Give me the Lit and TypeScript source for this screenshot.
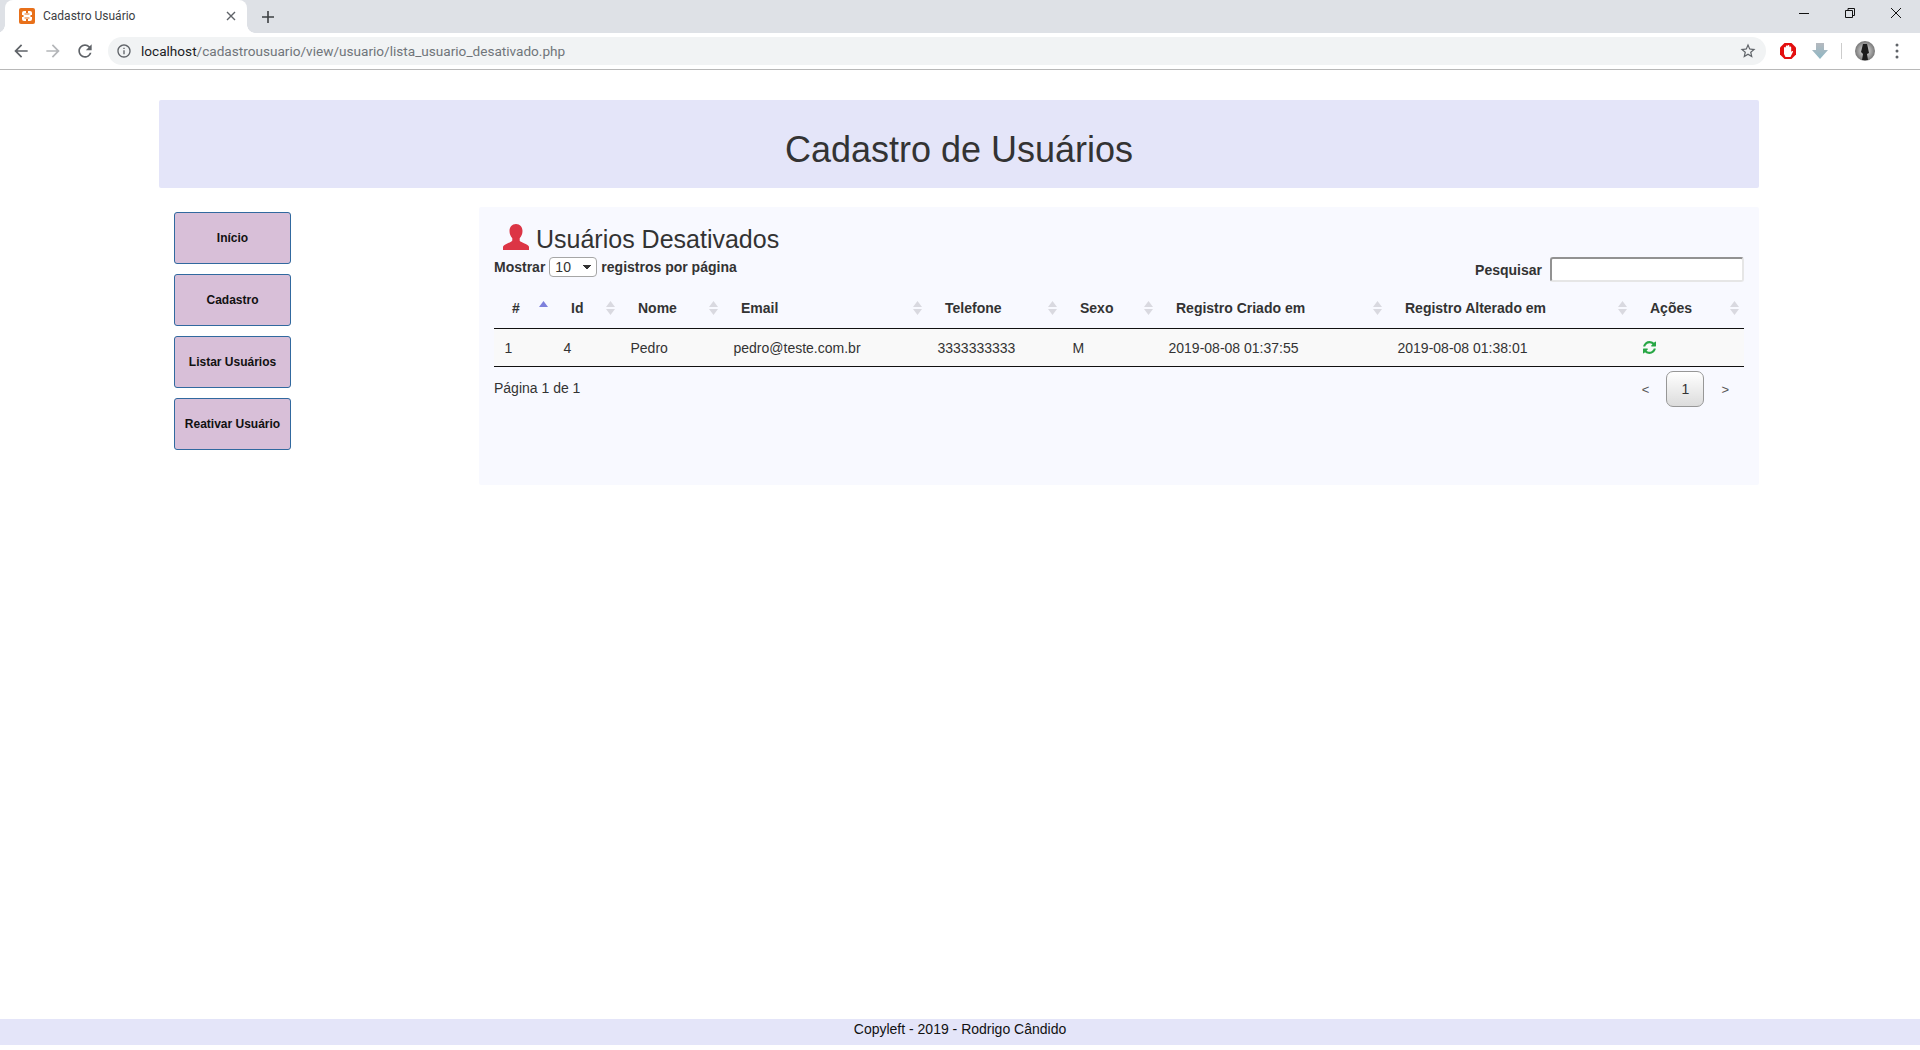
import { LitElement, html, css, svg } from 'lit';
import { customElement } from 'lit/decorators.js';

const COLUMNS = ['#', 'Id', 'Nome', 'Email', 'Telefone', 'Sexo', 'Registro Criado em', 'Registro Alterado em', 'Ações'];
const MENU = ['Início', 'Cadastro', 'Listar Usuários', 'Reativar Usuário'];
const ROW = ['1', '4', 'Pedro', 'pedro@teste.com.br', '3333333333', 'M', '2019-08-08 01:37:55', '2019-08-08 01:38:01'];

// Small helper for the material style icons of the browser bar
const icon = (d: string, fill = '#5f6368', size = 20) => html`
  <svg width=${size} height=${size} viewBox="0 0 24 24" fill=${fill}>${svg`<path d=${d}></path>`}</svg>`;

const ARROW_BACK = 'M20 11H7.83l5.59-5.59L12 4l-8 8 8 8 1.41-1.41L7.83 13H20v-2z';
const ARROW_FORWARD = 'M12 4l-1.41 1.41L16.17 11H4v2h12.17l-5.58 5.59L12 20l8-8z';
const RELOAD = 'M17.65 6.35A7.96 7.96 0 0 0 12 4c-4.42 0-7.99 3.58-7.99 8s3.57 8 7.99 8c3.73 0 6.84-2.55 7.73-6h-2.08A5.99 5.99 0 0 1 12 18c-3.31 0-6-2.69-6-6s2.69-6 6-6c1.66 0 3.14.69 4.22 1.78L13 11h7V4l-2.35 2.35z';
const INFO = 'M11 7h2v2h-2zm0 4h2v6h-2zm1-9C6.48 2 2 6.48 2 12s4.48 10 10 10 10-4.48 10-10S17.52 2 12 2zm0 18c-4.41 0-8-3.59-8-8s3.59-8 8-8 8 3.59 8 8-3.59 8-8 8z';
const STAR = 'M22 9.24l-7.19-.62L12 2 9.19 8.63 2 9.24l5.46 4.73L5.82 21 12 17.27 18.18 21l-1.63-7.03L22 9.24zM12 15.4l-3.76 2.27 1-4.28-3.32-2.88 4.38-.38L12 6.1l1.71 4.04 4.38.38-3.32 2.88 1 4.28L12 15.4z';
const REFRESH = 'M1511 928q0 5-1 7-64 268-268 434.5t-478 166.5q-146 0-282.5-55t-243.5-157l-129 129q-19 19-45 19t-45-19-19-45v-448q0-26 19-45t45-19h448q26 0 45 19t19 45-19 45l-137 137q71 66 161 102t187 36q134 0 250-65t186-179q11-17 53-117 8-23 30-23h192q13 0 22.5 9.5t9.5 22.5zm25-800v448q0 26-19 45t-45 19h-448q-26 0-45-19t-19-45 19-45l138-138q-148-137-349-137-134 0-250 65t-186 179q-11 17-53 117-8 23-30 23h-199q-13 0-22.5-9.5t-9.5-22.5v-7q65-268 270-434.5t480-166.5q146 0 284 55.5t245 156.5l130-129q19-19 45-19t45 19 19 45z';

@customElement('app-root')
export class AppRoot extends LitElement {
  static styles = css`
    :host {
      display: flex;
      flex-direction: column;
      height: 1050px;
      overflow: hidden;
      background: #fff;
      font-family: 'Liberation Sans', Arial, sans-serif;
      font-size: 14px;
      color: #333;
    }

    /* browser window */
    .tabstrip {
      height: 33px;
      background: #dee1e6;
      display: flex;
      align-items: flex-end;
      padding-left: 5px;
      flex: none;
    }
    .tab {
      position: relative;
      width: 242px;
      height: 33px;
      box-sizing: border-box;
      background: #fff;
      border-radius: 8px 8px 0 0;
      display: flex;
      align-items: center;
      padding: 0 0 2px 14px;
      font-family: Roboto, sans-serif;
      font-size: 12px;
      color: #3c4043;
    }
    .tab::before, .tab::after {
      content: '';
      position: absolute;
      bottom: 0;
      width: 8px;
      height: 8px;
    }
    .tab::before { left: -8px; background: radial-gradient(circle at 0 0, #dee1e6 7.5px, #fff 8px); }
    .tab::after { right: -8px; background: radial-gradient(circle at 100% 0, #dee1e6 7.5px, #fff 8px); }
    .tab-title { margin-left: 8px; flex: 1; }
    .tab-close { margin-right: 11px; display: flex; }
    .new-tab { margin: 0 0 10px 15px; display: flex; }
    .win-controls {
      margin-left: auto;
      align-self: flex-start;
      display: flex;
      gap: 26px;
      padding: 3px 14px 0 0;
    }
    .toolbar {
      height: 36px;
      flex: none;
      box-sizing: content-box;
      border-bottom: 1px solid #b8b8b8;
      display: flex;
      align-items: center;
      padding: 0 0 0 11px;
      background: #fff;
    }
    .nav { display: flex; gap: 12px; }
    .omnibox {
      margin-left: 13px;
      width: 1658px;
      height: 28px;
      box-sizing: border-box;
      border-radius: 14px;
      background: #f1f3f4;
      display: flex;
      align-items: center;
      padding: 0 9px 0 8px;
      font-family: Roboto, sans-serif;
      font-size: 13.6px;
      color: #70757a;
    }
    .url { margin-left: 9px; flex: 1; }
    .url b { font-weight: 400; color: #202124; }
    .extensions { display: flex; align-items: center; margin-left: 13px; }
    .ext-sep { width: 1px; height: 16px; background: #ccc; margin: 0 13px 0 12px; }
    .dots { margin-left: 20px; }

    /* page */
    .page {
      flex: 1;
      display: flex;
      flex-direction: column;
    }
    .banner {
      margin: 30px 161px 0 159px;
      height: 88px;
      background: #e4e5f9;
      border-radius: 2px;
      display: flex;
      align-items: center;
      justify-content: center;
    }
    .banner h1 {
      margin: 0;
      font-size: 36px;
      font-weight: 400;
      line-height: 40px;
      padding-top: 12px;
      color: #333;
    }
    .main {
      margin: 19px 161px 0 159px;
      display: grid;
      grid-template-columns: 320px 1fr;
    }
    .menu {
      display: flex;
      flex-direction: column;
      gap: 10px;
      padding: 5px 0 0 15px;
    }
    .menu button {
      width: 117px;
      height: 52px;
      padding: 0;
      background: #d8bfd8;
      border: 1px solid #31699f;
      border-radius: 3px;
      font: bold 12px 'Liberation Sans', Arial, sans-serif;
      color: #111;
    }
    .panel {
      background: #f8f9ff;
      border-radius: 2px;
      padding: 17px 15px 78px 15px;
    }
    .heading {
      display: flex;
      align-items: flex-start;
      gap: 7px;
      height: 33px;
      padding-left: 9px;
    }
    .heading h2 {
      margin: 0;
      font-size: 25px;
      font-weight: 400;
      line-height: 30px;
      color: #333;
    }
    .controls {
      display: flex;
      justify-content: space-between;
      align-items: flex-start;
      font-weight: 700;
      height: 31px;
    }
    .length { display: flex; align-items: center; gap: 4px; height: 20px; }
    .length select {
      appearance: none;
      width: 48px;
      height: 20px;
      padding: 0 0 0 5px;
      background:
        linear-gradient(to top right, transparent 50%, #333 50%) 33px 7px / 4px 5px no-repeat,
        linear-gradient(to top left, transparent 50%, #333 50%) 37px 7px / 4px 5px no-repeat,
        #fff;
      border: 1px solid #a6a6a6;
      border-radius: 4px;
      font: 14px 'Liberation Sans', Arial, sans-serif;
      color: #333;
    }
    .search { display: flex; align-items: center; gap: 8px; height: 25px; }
    .search input {
      width: 194px;
      height: 25px;
      box-sizing: border-box;
      background: #fff;
      border: 2px inset #e6e6e6;
      border-radius: 3px;
      padding: 0 4px;
    }
    table {
      width: 1250px;
      table-layout: fixed;
      border-collapse: collapse;
    }
    col.c0 { width: 59px; }
    col.c1 { width: 67px; }
    col.c2 { width: 103px; }
    col.c3 { width: 204px; }
    col.c4 { width: 135px; }
    col.c5 { width: 96px; }
    col.c6 { width: 229px; }
    col.c7 { width: 245px; }
    col.c8 { width: 112px; }
    th {
      height: 40px;
      padding: 0;
      text-align: left;
      font-weight: 700;
      border-bottom: 1px solid #111;
    }
    .th-inner {
      display: flex;
      justify-content: space-between;
      align-items: center;
      padding: 0 5px 0 18px;
    }
    td {
      height: 37px;
      padding: 0 0 0 10.5px;
      background: #f9f9f9;
      border-bottom: 1px solid #111;
    }
    td svg { display: block; }
    .foot {
      display: flex;
      justify-content: space-between;
      align-items: center;
      margin-top: 4px;
      height: 36px;
    }
    .foot .info { margin-top: -2px; }
    .pager { display: flex; align-items: center; gap: 17px; padding-right: 15px; }
    .pager span { font-size: 13px; color: #555; }
    .pager button {
      width: 38px;
      height: 36px;
      padding: 0;
      border: 1px solid #979797;
      border-radius: 7px;
      background: linear-gradient(#fff, #dcdcdc);
      font: 14px 'Liberation Sans', Arial, sans-serif;
      color: #333;
    }
    footer {
      margin: auto 0 5px;
      height: 26px;
      background: #e4e5f9;
      text-align: center;
      line-height: 21px;
      color: #111;
    }
  `;

  private sortIcon(active: boolean) {
    return html`
      <svg width="9" height="14" viewBox="0 0 9 14">
        <path d="M4.5 0L9 6H0z" fill=${active ? '#7d80dc' : '#d9d9e0'}></path>
        ${active ? '' : svg`<path d="M4.5 14L0 8h9z" fill="#d9d9e0"></path>`}
      </svg>`;
  }

  private renderBrowser() {
    return html`
      <div class="tabstrip">
        <div class="tab">
          <svg width="16" height="16" viewBox="0 0 16 16">
            <rect width="16" height="16" rx="2" fill="#e8701a"></rect>
            <rect x="3" y="3" width="10" height="10" rx="2" fill="#fff"></rect>
            <g fill="#e8701a">
              <rect x="7" y="3" width="2" height="2"></rect>
              <rect x="7" y="11" width="2" height="2"></rect>
              <rect x="3" y="7" width="1.500" height="2"></rect>
              <rect x="11.500" y="7" width="1.500" height="2"></rect>
              <rect x="5.500" y="5.500" width="5" height="1"></rect>
              <rect x="5.500" y="9.500" width="5" height="1"></rect>
            </g>
          </svg>
          <span class="tab-title">Cadastro Usuário</span>
          <span class="tab-close">
            <svg width="10" height="10" viewBox="0 0 10 10"><path d="M1 1l8 8M9 1l-8 8" stroke="#5f6368" stroke-width="1.4"></path></svg>
          </span>
        </div>
        <span class="new-tab">
          <svg width="12" height="12" viewBox="0 0 12 12"><path d="M6 0v12M0 6h12" stroke="#3c4043" stroke-width="1.6"></path></svg>
        </span>
        <div class="win-controls">
          <svg width="20" height="20" viewBox="0 0 20 20"><path d="M5 10.5h10" stroke="#111" stroke-width="1"></path></svg>
          <svg width="20" height="20" viewBox="0 0 20 20" fill="none" stroke="#111"><path d="M5.5 7.5h7v7h-7zM8 7.5V5.500h6.500v7h-2"></path></svg>
          <svg width="20" height="20" viewBox="0 0 20 20"><path d="M5 5l10 10M15 5L5 15" stroke="#111" stroke-width="1"></path></svg>
        </div>
      </div>
      <div class="toolbar">
        <div class="nav">
          ${icon(ARROW_BACK)}
          ${icon(ARROW_FORWARD, '#b4b6b9')}
          ${icon(RELOAD)}
        </div>
        <div class="omnibox">
          ${icon(INFO, '#5f6368', 16)}
          <span class="url"><b>localhost</b>/cadastrousuario/view/usuario/lista_usuario_desativado.php</span>
          ${icon(STAR, '#5f6368', 18)}
        </div>
        <div class="extensions">
          <svg width="18" height="18" viewBox="0 0 18 18">
            <path d="M5.500 1h7L17 5.500v7L12.500 17h-7L1 12.500v-7z" fill="#e30f0f"></path>
            <path d="M5 9V6a.9.9 0 0 1 1.800 0V4.500a.9.9 0 0 1 1.800 0V4a.9.9 0 0 1 1.800 0v1.500a.9.9 0 0 1 1.800 0V10l.6-.8c.6-.7 1.500 0 1.100.7L11.500 15h-5L5 12z" fill="#fff"></path>
          </svg>
          <svg width="18" height="18" viewBox="0 0 18 18" style="margin-left:14px">
            <defs><linearGradient id="dl" x1="0" y1="0" x2="0" y2="1"><stop offset="0" stop-color="#b5b9bf"></stop><stop offset="1" stop-color="#8db7c4"></stop></linearGradient></defs>
            <path d="M5 1h8v7h4l-8 9-8-9h4z" fill="url(#dl)"></path>
          </svg>
          <span class="ext-sep"></span>
          <svg width="20" height="20" viewBox="0 0 20 20">
            <defs><radialGradient id="av"><stop offset="0" stop-color="#eee"></stop><stop offset="1" stop-color="#777"></stop></radialGradient></defs>
            <circle cx="10" cy="10" r="10" fill="url(#av)"></circle>
            <path d="M8 3h4l1 4 1 5-2 1 1 6H7l1-6-2-2 1-4z" fill="#1c1c1c"></path>
          </svg>
          <svg class="dots" width="4" height="16" viewBox="0 0 4 16" fill="#5f6368">
            <circle cx="2" cy="2" r="1.500"></circle><circle cx="2" cy="8" r="1.500"></circle><circle cx="2" cy="14" r="1.500"></circle>
          </svg>
        </div>
      </div>`;
  }

  render() {
    return html`
      ${this.renderBrowser()}
      <div class="page">
        <header class="banner"><h1>Cadastro de Usuários</h1></header>
        <div class="main">
          <nav class="menu">
            ${MENU.map((item) => html`<button>${item}</button>`)}
          </nav>
          <section class="panel">
            <div class="heading">
              <svg width="26" height="26" viewBox="0 0 26 26" fill="#dc3545">
                <path d="M13 0c4 0 6.500 3 6.500 7 0 3-1.200 5.500-2.800 7.200v2.300c0 1 3 2 6 3.500 2 1 3.300 2 3.300 3v3H0v-3c0-1 1.300-2 3.300-3 3-1.500 6-2.500 6-3.500v-2.300C7.700 12.500 6.500 10 6.500 7c0-4 2.500-7 6.500-7z"></path>
              </svg>
              <h2>Usuários Desativados</h2>
            </div>
            <div class="controls">
              <div class="length">
                <span>Mostrar</span>
                <select><option>10</option></select>
                <span>registros por página</span>
              </div>
              <div class="search">
                <span>Pesquisar</span>
                <input type="text" />
              </div>
            </div>
            <table>
              <colgroup>${COLUMNS.map((_, i) => html`<col class="c${i}" />`)}</colgroup>
              <thead>
                <tr>
                  ${COLUMNS.map((name, i) => html`
                    <th><div class="th-inner"><span>${name}</span>${this.sortIcon(i === 0)}</div></th>`)}
                </tr>
              </thead>
              <tbody>
                <tr>
                  ${ROW.map((value) => html`<td>${value}</td>`)}
                  <td>
                    <svg width="13" height="13" viewBox="0 0 1536 1536" fill="#28a745"><path d=${REFRESH}></path></svg>
                  </td>
                </tr>
              </tbody>
            </table>
            <div class="foot">
              <span class="info">Página 1 de 1</span>
              <div class="pager">
                <span>&lt;</span>
                <button>1</button>
                <span>&gt;</span>
              </div>
            </div>
          </section>
        </div>
        <footer>Copyleft - 2019 - Rodrigo Cândido</footer>
      </div>
    `;
  }
}
